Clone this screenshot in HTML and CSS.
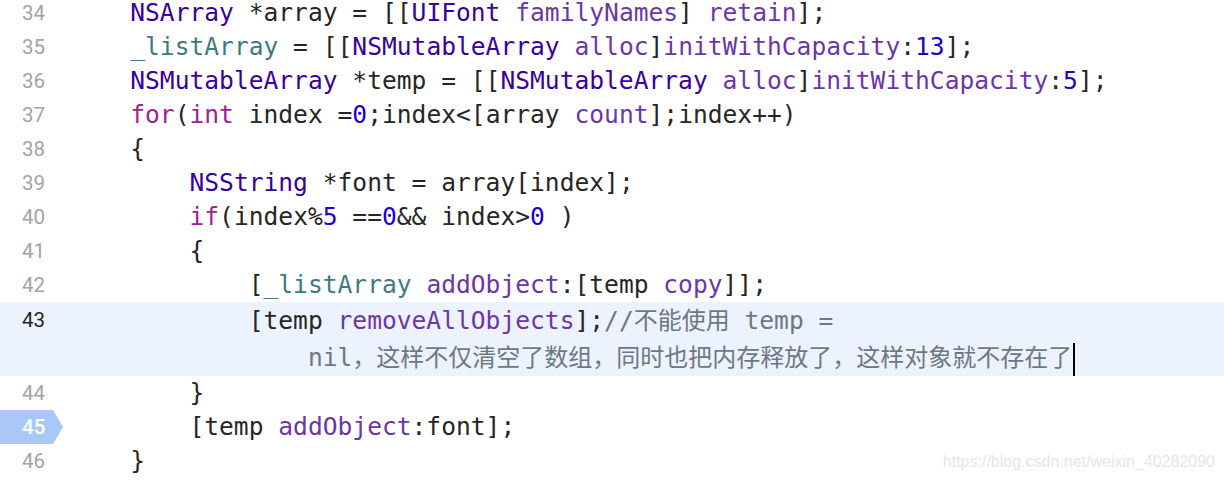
FILE: index.html
```html
<!DOCTYPE html>
<html lang="zh">
<head>
<meta charset="utf-8">
<title>Xcode editor</title>
<link rel="stylesheet" href="styles.css">
</head>
<body>
<div class="editor">
  <div class="row"><span class="ln">34</span><span class="code">    <span class="cls">NSArray</span> *array = [[<span class="cls">UIFont</span> <span class="mth">familyNames</span>] <span class="mth">retain</span>];</span></div>
  <div class="row"><span class="ln">35</span><span class="code">    <span class="ivar">_listArray</span> = [[<span class="cls">NSMutableArray</span> <span class="mth">alloc</span>]<span class="mth">initWithCapacity</span>:<span class="num">13</span>];</span></div>
  <div class="row"><span class="ln">36</span><span class="code">    <span class="cls">NSMutableArray</span> *temp = [[<span class="cls">NSMutableArray</span> <span class="mth">alloc</span>]<span class="mth">initWithCapacity</span>:<span class="num">5</span>];</span></div>
  <div class="row"><span class="ln">37</span><span class="code">    <span class="kw">for</span>(<span class="kw">int</span> index =<span class="num">0</span>;index&lt;[array <span class="mth">count</span>];index++)</span></div>
  <div class="row"><span class="ln">38</span><span class="code">    {</span></div>
  <div class="row"><span class="ln">39</span><span class="code">        <span class="cls">NSString</span> *font = array[index];</span></div>
  <div class="row"><span class="ln">40</span><span class="code">        <span class="kw">if</span>(index%<span class="num">5</span> ==<span class="num">0</span>&amp;&amp; index&gt;<span class="num">0</span> )</span></div>
  <div class="row"><span class="ln">41</span><span class="code">        {</span></div>
  <div class="row"><span class="ln">42</span><span class="code">            [<span class="ivar">_listArray</span> <span class="mth">addObject</span>:[temp <span class="mth">copy</span>]];</span></div>
  <div class="row hl"><span class="ln cur">43</span><div class="code multi"><div class="vl">            [temp <span class="mth">removeAllObjects</span>];<span class="com">//<span class="zh">不能使用</span> temp =</span></div><div class="vl second">                <span class="com">nil<span class="zh">，这样不仅清空了数组，同时也把内存释放了，这样对象就不存在了</span></span><span class="caret"></span></div></div></div>
  <div class="row"><span class="ln">44</span><span class="code">        }</span></div>
  <div class="row"><span class="ln bp">45</span><span class="code">        [temp <span class="mth">addObject</span>:font];</span></div>
  <div class="row"><span class="ln">46</span><span class="code">    }</span></div>
</div>
<div class="watermark">https://blog.csdn.net/weixin_40282090</div>
</body>
</html>
```

FILE: styles.css
```css
html, body {
  margin: 0;
  padding: 0;
  background: #ffffff;
  overflow: hidden;
}

body {
  width: 1224px;
  height: 480px;
  position: relative;
}

.editor {
  margin-top: -4px;
  display: flex;
  flex-direction: column;
}

.row {
  display: flex;
  height: 34px;
  align-items: flex-start;
}

.row.hl {
  height: 74px;
  background: #ecf3fe;
}

.ln {
  flex: 0 0 71px;
  box-sizing: border-box;
  height: 34px;
  padding-left: 22px;
  font-family: Roboto, "Liberation Sans", Arial, sans-serif;
  font-size: 20.5px;
  line-height: 34px;
  color: #a3a3a3;
}

.ln.cur {
  color: #1f1f1f;
  line-height: 36px;
}

.ln.bp {
  background: #a9c8f7;
  color: #ffffff;
  font-weight: 500;
  clip-path: polygon(0 0, 53px 0, 63px 50%, 53px 100%, 0 100%);
}

.code {
  font-family: "DejaVu Sans Mono", "Noto Sans CJK SC", monospace;
  font-size: 24.6px;
  line-height: 34px;
  height: 34px;
  white-space: pre;
  color: #262626;
}

.code.multi {
  height: 74px;
  display: flex;
  flex-direction: column;
}

.vl {
  height: 34px;
  line-height: 34px;
  white-space: pre;
}

.vl.second {
  height: 40px;
  line-height: 40px;
}

.cls { color: #3900a0; }
.mth { color: #6c36a9; }
.ivar { color: #3e7a80; }
.kw { color: #9b2393; }
.num { color: #1c00cf; }
.com { color: #6c7883; }

.zh {
  font-family: "Noto Sans CJK SC", sans-serif;
  font-size: 24px;
}

.caret {
  display: inline-block;
  width: 2px;
  height: 33px;
  background: #000000;
  margin-left: 1px;
  vertical-align: middle;
}

.watermark {
  position: absolute;
  right: 9px;
  bottom: 9px;
  font-family: "Liberation Sans", Arial, sans-serif;
  font-size: 16px;
  line-height: 18px;
  color: #e6e6e6;
}
```
